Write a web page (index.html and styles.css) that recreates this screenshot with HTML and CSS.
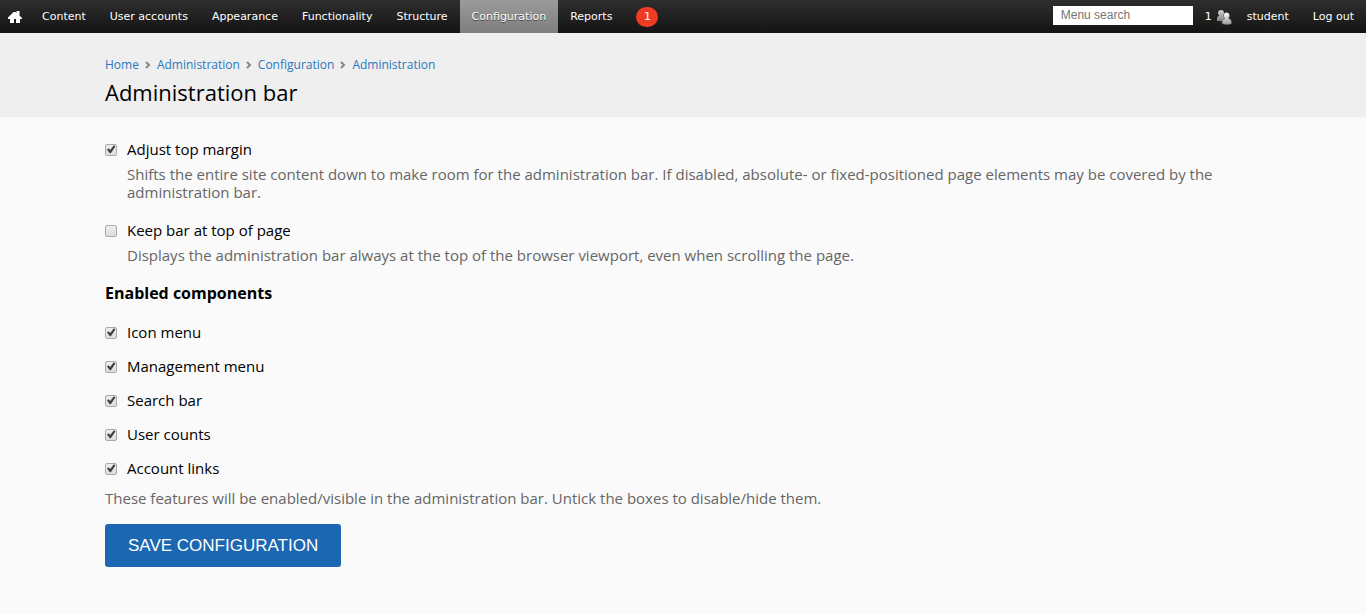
FILE: index.html
```html
<!DOCTYPE html>
<html lang="en">
<head>
<meta charset="utf-8">
<meta name="viewport" content="width=device-width, initial-scale=1">
<title>Administration bar</title>
<link rel="stylesheet" href="styles.css">
</head>
<body>
<nav class="admin-bar" aria-label="Administration">
  <ul class="admin-menu">
    <li><a class="home-link" href="#" aria-label="Home"><svg class="home-icon" viewBox="0 0 14 12" aria-hidden="true"><path fill="#fff" d="M5.500 1h2l1 1V0h3v4.500L14 7v1h-2v4H8V8H6v4H2V8H0V6.500z"/></svg></a></li>
    <li><a href="#">Content</a></li>
    <li><a href="#">User accounts</a></li>
    <li><a href="#">Appearance</a></li>
    <li><a href="#">Functionality</a></li>
    <li><a href="#">Structure</a></li>
    <li><a class="active" href="#">Configuration</a></li>
    <li><a href="#">Reports</a></li>
    <li><a href="#"><span class="alert-count">1</span></a></li>
  </ul>
  <ul class="admin-extra">
    <li class="search-item"><input class="search" type="search" placeholder="Menu search" aria-label="Menu search"></li>
    <li><a class="users-link" href="#"><span>1</span><svg class="users-icon" viewBox="0 0 16 16" aria-hidden="true"><defs><linearGradient id="person" x2="0" y2="1"><stop stop-color="#fff"/><stop offset="1" stop-color="#999"/></linearGradient></defs><path fill="url(#person)" opacity=".8" d="M5 1c2 0 3 1 3 3 0 1.500-.5 2.500-1 3 2 .5 3 2 3 4v1H1V10c0-2 1-3 2.500-3.500C2.500 6 2 5 2 4c0-2 1-3 3-3z"/><path fill="url(#person)" stroke="#555" stroke-width=".5" d="M10.500 3.500c2 0 3 1.200 3 3 0 1.300-.5 2.300-1 3 2 .5 3 2 3 4v1c-2 1.500-7 1.500-9.500 0v-1c0-2 1-3.500 3-4-1-.7-1.500-1.700-1.500-3 0-1.800 1-3 3-3z"/></svg></a></li>
    <li><a href="#">student</a></li>
    <li><a href="#">Log out</a></li>
  </ul>
</nav>
<header class="page-header">
  <nav aria-label="Breadcrumb">
    <ol class="breadcrumb">
      <li><a href="#">Home</a></li>
      <li><svg class="chevron" viewBox="0 0 6 8" aria-hidden="true"><path d="M1 1l3 3-3 3"/></svg><a href="#">Administration</a></li>
      <li><svg class="chevron" viewBox="0 0 6 8" aria-hidden="true"><path d="M1 1l3 3-3 3"/></svg><a href="#">Configuration</a></li>
      <li><svg class="chevron" viewBox="0 0 6 8" aria-hidden="true"><path d="M1 1l3 3-3 3"/></svg><a href="#">Administration</a></li>
    </ol>
  </nav>
  <h1>Administration bar</h1>
</header>
<main class="content">
  <form>
    <div class="field">
      <input type="checkbox" id="margin" checked aria-describedby="margin-help">
      <label for="margin">Adjust top margin</label>
      <p class="help" id="margin-help">Shifts the entire site content down to make room for the administration bar. If disabled, absolute- or fixed-positioned page elements may be covered by the administration bar.</p>
    </div>
    <div class="field">
      <input type="checkbox" id="keep" aria-describedby="keep-help">
      <label for="keep">Keep bar at top of page</label>
      <p class="help" id="keep-help">Displays the administration bar always at the top of the browser viewport, even when scrolling the page.</p>
    </div>
    <fieldset class="components">
      <legend>Enabled components</legend>
      <div class="option"><input type="checkbox" id="icon" checked><label for="icon">Icon menu</label></div>
      <div class="option"><input type="checkbox" id="management" checked><label for="management">Management menu</label></div>
      <div class="option"><input type="checkbox" id="search" checked><label for="search">Search bar</label></div>
      <div class="option"><input type="checkbox" id="counts" checked><label for="counts">User counts</label></div>
      <div class="option"><input type="checkbox" id="account" checked><label for="account">Account links</label></div>
    </fieldset>
    <p class="note">These features will be enabled/visible in the administration bar. Untick the boxes to disable/hide them.</p>
    <button class="save" type="button">SAVE CONFIGURATION</button>
  </form>
</main>
</body>
</html>
```
FILE: styles.css
```css
* { box-sizing: border-box; }
body {
  margin: 0;
  background: #fafafa;
  color: #000;
  font: 15px/18px "Open Sans", sans-serif;
}
ul, ol { list-style: none; margin: 0; padding: 0; }
a { text-decoration: none; }
.admin-bar {
  display: flex;
  justify-content: space-between;
  height: 33px;
  background: linear-gradient(#2e2e2e, #141414);
  font: 11px/33px "DejaVu Sans", sans-serif;
}
.admin-menu, .admin-extra { display: flex; }
.admin-bar a {
  display: flex;
  align-items: center;
  height: 33px;
  padding: 0 12px;
  color: #fff;
}
.admin-bar .home-link { padding: 0 8px; }
.home-icon { width: 14px; height: 12px; }
.admin-bar .active {
  background: linear-gradient(#9b9b9b, #7d7d7d);
  text-shadow: 0 1px 0 #444;
}
.alert-count {
  width: 22px;
  height: 20px;
  border-radius: 10px;
  background: #ee3b24;
  line-height: 20px;
  text-align: center;
}
.search-item { display: flex; align-items: flex-start; padding-top: 6px; }
.search {
  width: 140px;
  height: 19px;
  padding: 0 8px 1px;
  border: 0;
  background: #fff;
  font: 12px "Liberation Sans", sans-serif;
}
.admin-bar .users-link { gap: 4px; padding-right: 3px; }
.users-icon { width: 16px; height: 16px; }
.page-header {
  padding: 23px 105px 10px;
  background: #efefef;
}
.breadcrumb { display: flex; font-size: 12px; line-height: 18px; }
.breadcrumb a { color: #2a78bd; }
.chevron {
  width: 6px;
  height: 8px;
  margin: 0 6px;
  fill: none;
  stroke: #888;
  stroke-width: 2px;
}
h1 { margin: 3px 0 0; font-size: 22px; font-weight: 400; line-height: 30px; }
.content { padding: 23px 105px 46px; }
.field, .option {
  display: grid;
  grid-template-columns: 12px 1fr;
  column-gap: 10px;
  align-items: center;
}
.field { margin-bottom: 20px; }
.help { grid-column: 2; margin: 7px 0 0; color: #666; }
input[type="checkbox"] {
  appearance: none;
  width: 12px;
  height: 12px;
  margin: 1px 0 0;
  border: 1px solid #aaa;
  border-radius: 2px;
  background: linear-gradient(#eee, #ddd);
}
input[type="checkbox"]:checked::before {
  content: "";
  display: block;
  width: 10px;
  height: 10px;
  background: #404040;
  clip-path: polygon(10% 50%, 25% 38%, 42% 55%, 78% 8%, 94% 20%, 48% 88%, 38% 88%);
}
.components { margin: -2px 0 0; padding: 0; border: 0; }
legend { padding: 0; font-size: 16px; font-weight: 700; line-height: 22px; }
.option { margin-top: 16px; }
legend + .option { margin-top: 19px; }
.note { margin: 12px 0 17px; color: #666; }
.save {
  height: 43px;
  padding: 0 23px;
  border: 0;
  border-radius: 3px;
  background: #1b67b2;
  color: #fff;
  font: 17px "Liberation Sans", sans-serif;
}
```
